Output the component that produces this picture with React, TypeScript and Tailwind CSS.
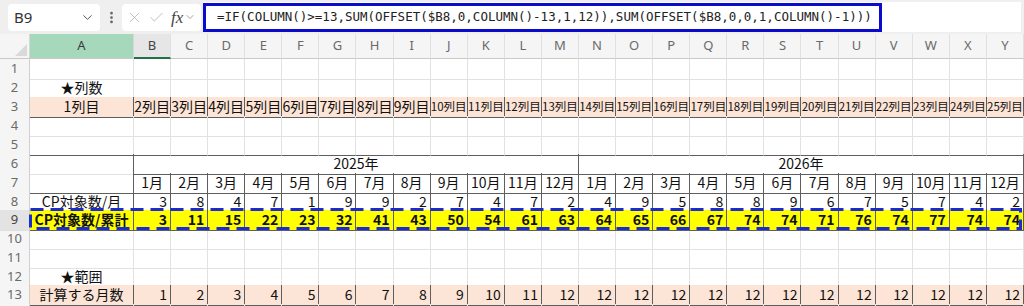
import React from "react";
import { ChevronDown, X, Check, EllipsisVertical } from "lucide-react";

const GRID = "grid grid-cols-[30px_104px_repeat(24,minmax(0,1fr))]";
const JP = "font-['Noto_Sans_CJK_JP','Noto_Sans',sans-serif]";

const letters = "BCDEFGHIJKLMNOPQRSTUVWXY".split("");
const months = Array.from({ length: 24 }, (_, i) => `${(i % 12) + 1}月`);
const row8 = [3, 8, 4, 7, 1, 9, 9, 2, 7, 4, 7, 2, 4, 9, 5, 8, 8, 9, 6, 7, 5, 7, 4, 2];
const row9 = [3, 11, 15, 22, 23, 32, 41, 43, 50, 54, 61, 63, 64, 65, 66, 67, 74, 74, 71, 76, 74, 77, 74, 74];
const row13 = Array.from({ length: 24 }, (_, i) => Math.min(i + 1, 12));

type CellProps = {
  children?: React.ReactNode;
  rd?: boolean;
  bd?: boolean;
  className?: string;
};

function Cell({ children, rd = false, bd = false, className = "" }: CellProps) {
  return (
    <div
      className={[
        "border-r border-b overflow-hidden whitespace-nowrap flex items-center min-w-0",
        rd ? "border-r-[#5e5e5e]" : "border-r-[#e2e2e2]",
        bd ? "border-b-[#5e5e5e]" : "border-b-[#e2e2e2]",
        className,
      ].join(" ")}
    >
      {children}
    </div>
  );
}

function RowHead({ n, active = false }: { n?: number; active?: boolean }) {
  return (
    <div
      className={
        "border-r border-b border-r-[#cfcfcf] border-b-[#e0e0e0] flex items-center justify-center text-[13px] font-['Noto_Sans',sans-serif] " +
        (active ? "bg-[#e3e3e3] text-[#444]" : "bg-[#f5f5f5] text-[#6a6a6a]")
      }
    >
      {n}
    </div>
  );
}

function Row({ h, children, className = "" }: { h: 18 | 19; children: React.ReactNode; className?: string }) {
  return <div className={GRID + " " + (h === 18 ? "h-[18px] " : "h-[19px] ") + className}>{children}</div>;
}

function Empty({ n, bd = false, h = 19 }: { n?: number; bd?: boolean; h?: 18 | 19 }) {
  return (
    <Row h={h}>
      <RowHead n={n} />
      <Cell bd={bd} />
      {letters.map((l) => (
        <Cell key={l} bd={bd} />
      ))}
    </Row>
  );
}

export default function App() {
  return (
    <div className={"w-[1024px] h-[306px] overflow-hidden bg-white text-[#111] " + JP}>
      {/* Formula bar */}
      <div className="h-[34px] bg-[#efefef] flex items-center">
        <div className="ml-[8px] w-[92px] h-[27px] bg-white rounded-[4px] flex items-center justify-between pl-[6px] pr-[5px]">
          <span className="text-[15px] text-[#333] font-['Noto_Sans',sans-serif]">B9</span>
          <ChevronDown size={15} strokeWidth={1.6} className="text-[#555]" />
        </div>
        <div className="w-[22px] flex justify-center">
          <EllipsisVertical size={15} strokeWidth={2.4} className="text-[#666]" />
        </div>
        <div className="w-[79px] h-[27px] bg-white rounded-[4px] flex items-center pl-[4px]">
          <X size={17} strokeWidth={1.2} className="text-[#b3b3b3]" />
          <Check size={17} strokeWidth={1.2} className="ml-[5px] text-[#b3b3b3]" />
          <span className="ml-[6px] text-[17px] italic text-[#444] font-['Liberation_Serif',serif] leading-none">fx</span>
          <ChevronDown size={12} strokeWidth={1.4} className="ml-[1px] text-[#777]" />
        </div>
        <div className="ml-[2px] flex-1 h-[30px] bg-white mr-[3px] flex items-center">
          <div className="w-[679px] h-[29px] border-[3px] border-[#0b0bce] flex items-center pl-[11px] pt-[1px]">
            <span className="text-[12.5px] text-[#222] font-['DejaVu_Sans_Mono',monospace] whitespace-nowrap">
              =IF(COLUMN()&gt;=13,SUM(OFFSET($B8,0,COLUMN()-13,1,12)),SUM(OFFSET($B8,0,0,1,COLUMN()-1)))
            </span>
          </div>
        </div>
      </div>

      {/* Column headers */}
      <div className={GRID + " h-[25px] bg-[#f5f5f5] font-['Noto_Sans',sans-serif] text-[13px]"}>
        <div className="relative border-r border-b border-r-[#d6d6d6] border-b-[#c9c9c9]">
          <div className="absolute right-[2px] bottom-[2px] w-0 h-0 border-l-[12px] border-l-transparent border-b-[12px] border-b-[#d9d9d9]" />
        </div>
        <div className="bg-[#a6d8bb] border-r border-b border-r-[#d6d6d6] border-b-[#c9c9c9] flex items-center justify-center text-[#3b3b3b]">
          A
        </div>
        {letters.map((l) => (
          <div
            key={l}
            className={
              "border-r border-r-[#e0e0e0] flex items-center justify-center " +
              (l === "B"
                ? "bg-[#e6e6e6] border-b-2 border-b-[#217346] text-[#444]"
                : "border-b border-b-[#c9c9c9] text-[#6a6a6a]")
            }
          >
            {l}
          </div>
        ))}
      </div>

      {/* Rows */}
      <Empty n={1} />
      <Row h={19}>
        <RowHead n={2} />
        <Cell bd className="justify-center text-[14px]">★列数</Cell>
        {letters.map((l) => (
          <Cell key={l} bd />
        ))}
      </Row>
      <Row h={19}>
        <RowHead n={3} />
        <Cell rd bd className="justify-center text-[14px] bg-[#fce4d6]">1列目</Cell>
        {letters.map((l, i) => (
          <Cell
            key={l}
            rd
            bd
            className={"justify-center bg-[#fce4d6] " + (i + 2 >= 10 ? "text-[11.5px]" : "text-[14px]")}
          >
            {i + 2}列目
          </Cell>
        ))}
      </Row>
      <Empty n={4} />
      <Empty n={5} bd />
      <Row h={19}>
        <RowHead n={6} />
        <Cell rd />
        <Cell rd bd className="col-span-12 justify-center text-[14px]">2025年</Cell>
        <Cell rd bd className="col-span-12 justify-center text-[14px]">2026年</Cell>
      </Row>
      <Row h={19}>
        <RowHead n={7} />
        <Cell rd bd />
        {months.map((m, i) => (
          <Cell key={i} rd bd className="justify-center text-[14px]">{m}</Cell>
        ))}
      </Row>
      <Row h={18}>
        <RowHead n={8} />
        <Cell rd bd className="justify-center text-[14px]">CP対象数/月</Cell>
        {row8.map((v, i) => (
          <Cell key={i} rd bd className="justify-end pr-[3px] text-[14px]">{v}</Cell>
        ))}
      </Row>
      <Row h={19} className="relative">
        <RowHead n={9} active />
        <Cell rd bd className="justify-center text-[14px] font-bold bg-[#ffff00]">CP対象数/累計</Cell>
        {row9.map((v, i) => (
          <Cell key={i} rd bd className="justify-end pr-[3px] text-[14px] font-bold bg-[#ffff00]">{v}</Cell>
        ))}
        <svg
          className="absolute left-[29px] top-[-2px] pointer-events-none"
          width="994"
          height="22"
          viewBox="0 0 994 22"
        >
          <rect x="1.5" y="1.5" width="990" height="19" fill="none" stroke="#1c2bd0" strokeWidth="3" strokeDasharray="13 7" />
        </svg>
      </Row>
      <Empty n={10} />
      <Empty n={11} />
      <Row h={18}>
        <RowHead n={12} />
        <Cell bd className="justify-center text-[14px]">★範囲</Cell>
        {letters.map((l) => (
          <Cell key={l} bd />
        ))}
      </Row>
      <Row h={19}>
        <RowHead n={13} />
        <Cell rd bd className="justify-center text-[14px] bg-[#fce4d6]">計算する月数</Cell>
        {row13.map((v, i) => (
          <Cell key={i} rd bd className="justify-end pr-[3px] text-[14px] bg-[#fce4d6]">{v}</Cell>
        ))}
      </Row>
      <Empty />
    </div>
  );
}
